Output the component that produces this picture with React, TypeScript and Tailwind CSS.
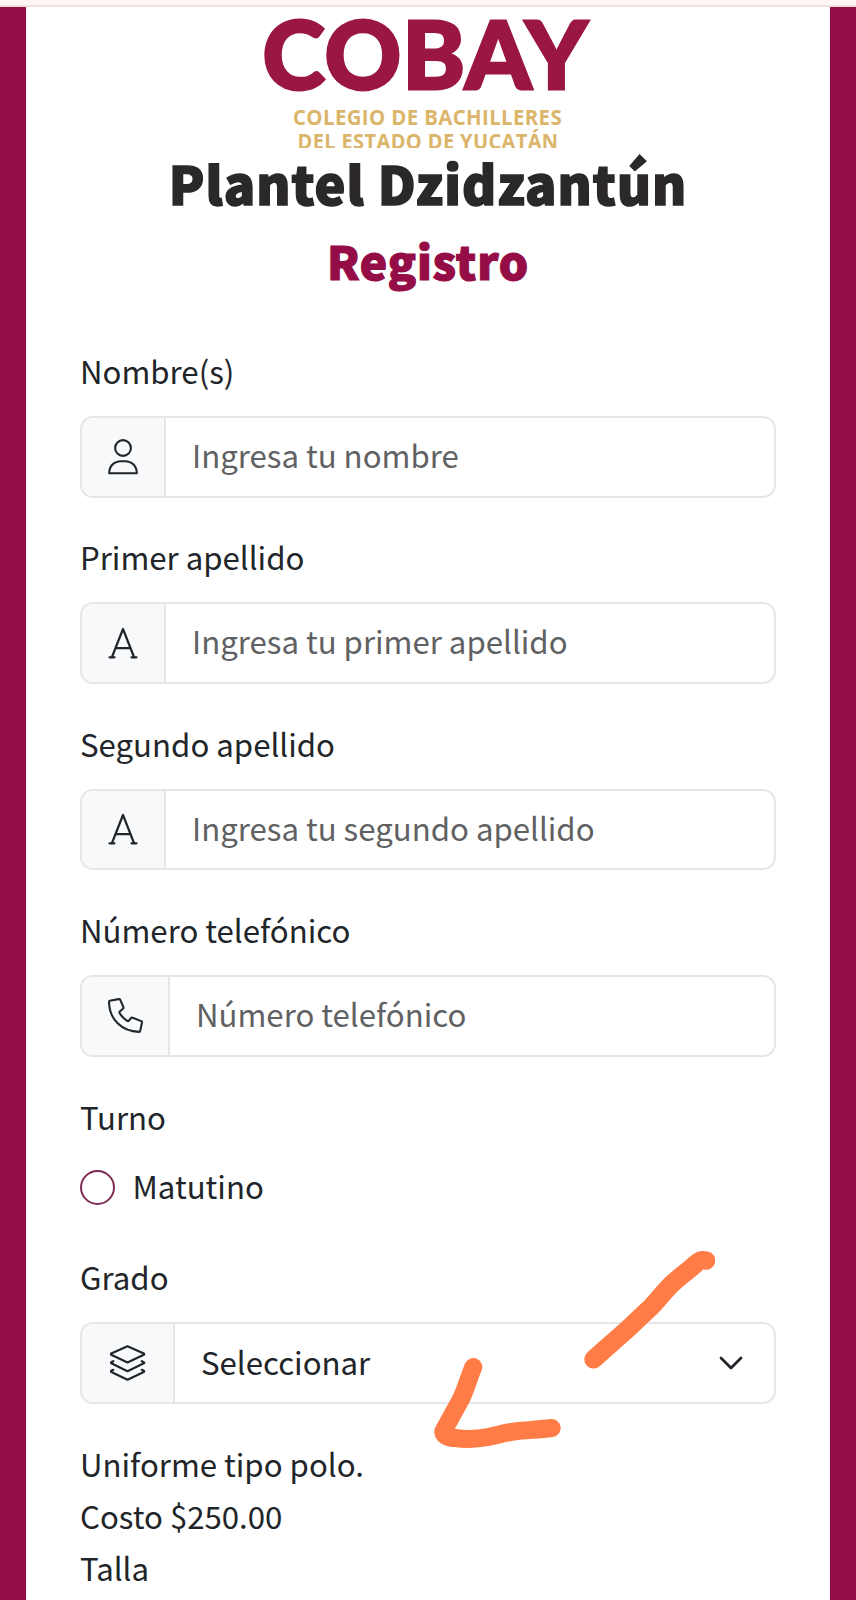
import type { ReactNode } from 'react';

function Logo() {
  return (
    <svg width="330" height="131" viewBox="0 0 330 131" className="mx-auto block overflow-hidden">
      <text
        x="-0.5"
        y="72"
        textLength="326"
        lengthAdjust="spacingAndGlyphs"
        strokeWidth="2.8"
        className="fill-[#9a1644] stroke-[#9a1644] font-['Lato',sans-serif] text-[93.5px] font-black tracking-[1px]"
      >
        COBAY
      </text>
      <text x="30" y="108" textLength="269" lengthAdjust="spacingAndGlyphs" className="fill-[#dbb56a] font-['Open_Sans',sans-serif] text-[22px] font-bold tracking-[0.4px]">
        COLEGIO DE BACHILLERES
      </text>
      <text x="34.5" y="132" textLength="261" lengthAdjust="spacingAndGlyphs" className="fill-[#dbb56a] font-['Open_Sans',sans-serif] text-[22px] font-bold tracking-[0.4px]">
        DEL ESTADO DE YUCATÁN
      </text>
    </svg>
  );
}

function UserIcon() {
  return (
    <svg width="30" height="36" viewBox="0 0 30 36" fill="none" stroke="currentColor" strokeWidth="2.1" strokeLinejoin="round">
      <circle cx="15" cy="9" r="7.900" />
      <path d="M1.200 34.300C1.200 27 6 22.200 13 22.200h4c7 0 11.800 4.800 11.800 12.100Z" />
    </svg>
  );
}

function LetterIcon() {
  return (
    <svg width="30" height="32" viewBox="0 0 30 32" fill="none" stroke="currentColor" strokeWidth="2.2" strokeLinecap="round" strokeLinejoin="round">
      <path d="M1.500 30.300h5M23.500 30.300h5M4 30 15 2l11 28M7.800 21.200h14.400" />
    </svg>
  );
}

function PhoneIcon() {
  return (
    <svg width="34" height="35" viewBox="0 0 34 35" fill="none" stroke="currentColor" strokeWidth="2.1" strokeLinejoin="round" className="overflow-visible">
      <path d="M1.800 2.700 10.800 1.100c.7-.1 1.200.2 1.500.8l3.100 7.300c.3.6.1 1.200-.4 1.600l-3 2.500c-.6.500-.7 1.100-.4 1.700 2 3.500 4.300 5.800 7.600 7.900.6.4 1.200.3 1.700-.3l2.200-2.600c.4-.5 1-.6 1.600-.3l8.500 3.400c.6.2.9.8.8 1.400l-1.800 8.400c-.1.6-.6 1-1.200 1C13.500 33.500 1.500 21.500 1 4c0-.7.2-1.200.8-1.300Z" />
    </svg>
  );
}

function LayersIcon() {
  return (
    <svg width="36" height="36" viewBox="0 0 36 36" fill="none" stroke="currentColor" strokeWidth="2.2" strokeLinecap="round" strokeLinejoin="round">
      <path d="M17.500 1.300 33.800 8.600c.6.3.6.8 0 1.100L17.500 17.500 1.200 9.700c-.6-.3-.6-.8 0-1.100ZM3.300 16.200l-2 1c-.6.300-.6.800 0 1.100L17.500 26.200l16.300-7.900c.6-.3.6-.8 0-1.100l-2-1M3.300 24.800l-2 1c-.6.300-.6.800 0 1.100L17.500 34.700l16.300-7.800c.6-.3.6-.8 0-1.100l-2-1" />
    </svg>
  );
}

function ChevronIcon() {
  return (
    <svg width="24" height="14" viewBox="0 0 24 14" fill="none" stroke="currentColor" strokeWidth="2.8" strokeLinecap="round" strokeLinejoin="round">
      <path d="m2 2 10 10L22 2" />
    </svg>
  );
}

function Label({ children }: { children: ReactNode }) {
  return <label className="mb-[17.5px] block h-[52.4px] leading-[50px]">{children}</label>;
}

interface FieldProps {
  label: string;
  icon: ReactNode;
  placeholder: string;
}

function Field({ label, icon, placeholder }: FieldProps) {
  return (
    <div className="mb-[34.8px]">
      <Label>{label}</Label>
      <div className="flex h-[81.7px] overflow-hidden rounded-[13px] border-2 border-[#e4e6e8]">
        <span className="flex shrink-0 items-center border-r-2 border-[#e4e6e8] bg-[#f8f9fb] px-[26px]">{icon}</span>
        <input
          type="text"
          placeholder={placeholder}
          className="min-w-0 flex-1 px-[26px] pb-[3px] outline-none placeholder:text-[#5f6163] placeholder:opacity-100"
        />
      </div>
    </div>
  );
}

export default function App() {
  return (
    <div className="relative h-[1600px] overflow-hidden bg-[#950d46] font-['Noto_Sans_CJK_SC',sans-serif] text-[31.2px] text-[#212529]">
      <div className="h-[7px] border-b-2 border-[#f1dfdc] bg-[#fff5f3]" />
      <main className="mx-[26px] h-[1593px] bg-white px-[54px] pt-[10px]">
        <Logo />
        <h1 className="h-[77px] text-center text-[52px] leading-[69px] font-black tracking-[1px] text-[#2b2829] [-webkit-text-stroke:1.5px_#2b2829]">
          Plantel Dzidzantún
        </h1>
        <h2 className="h-[72px] text-center text-[46.2px] leading-[70px] font-black tracking-[0.8px] text-[#950d46] [-webkit-text-stroke:1.2px_#950d46]">
          Registro
        </h2>
        <form className="pt-[49px]">
          <Field label="Nombre(s)" icon={<UserIcon />} placeholder="Ingresa tu nombre" />
          <Field label="Primer apellido" icon={<LetterIcon />} placeholder="Ingresa tu primer apellido" />
          <Field label="Segundo apellido" icon={<LetterIcon />} placeholder="Ingresa tu segundo apellido" />
          <Field label="Número telefónico" icon={<PhoneIcon />} placeholder="Número telefónico" />

          <Label>Turno</Label>
          <label className="mb-[38.4px] flex h-[52.4px] items-center gap-[17.5px]">
            <input type="radio" name="turno" className="size-[35px] appearance-none rounded-full border-2 border-[#7f2c54]" />
            <span className="pb-[3px]">Matutino</span>
          </label>

          <Label>Grado</Label>
          <div className="flex h-[81.7px] overflow-hidden rounded-[13px] border-2 border-[#e4e6e8]">
            <span className="flex shrink-0 items-center border-r-2 border-[#e4e6e8] bg-[#f8f9fb] px-[27.5px]">
              <LayersIcon />
            </span>
            <div className="flex flex-1 items-center justify-between pr-[31px] pl-[26px]">
              <span className="pb-[2px]">Seleccionar</span>
              <ChevronIcon />
            </div>
          </div>

          <div className="mt-[33.8px] leading-[52.4px]">
            <p>Uniforme tipo polo.</p>
            <p>Costo $250.00</p>
            <p>Talla</p>
          </div>
        </form>
      </main>

      {/* hand-drawn arrow over the form */}
      <svg
        width="290"
        height="210"
        viewBox="425 1245 290 210"
        fill="none"
        stroke="#ff7c47"
        strokeWidth="18"
        strokeLinecap="round"
        strokeLinejoin="round"
        className="pointer-events-none absolute top-[1245px] left-[425px]"
      >
        <path d="M706 1260.500C701 1259.500 699 1261 695 1264.500C688 1271 682 1275 674 1282C665 1290 659 1299 652 1306C645 1313 638 1319 631 1326C619 1337 606 1348 593.500 1359.300" strokeWidth="18.5" />
        <path d="M473.300 1367C469 1377 466 1389 461 1399C455 1410 450 1419 444 1430C441 1435 449 1438 455 1438C466 1439.500 476 1439.500 488 1437C500 1434.500 508 1432 516 1431.300C528 1430 540 1429.500 551.700 1428" />
      </svg>
    </div>
  );
}
